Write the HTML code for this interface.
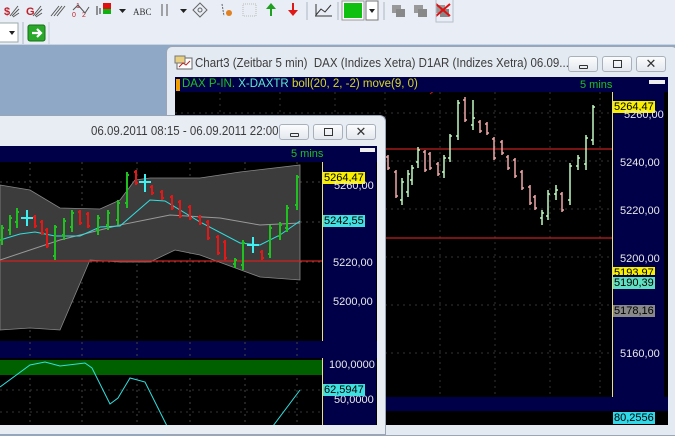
<!DOCTYPE html>
<html><head><meta charset="utf-8"><style>
*{margin:0;padding:0;box-sizing:border-box}
body{width:675px;height:425px;overflow:hidden;position:relative;background:#8ea8c6;font-family:"Liberation Sans",sans-serif}
.abs{position:absolute}
.tb{left:0;top:0;width:675px;height:45px;background:#e9edf5;border-bottom:1px solid #c9d2e0}
.title{font-size:12.5px;color:#3c3c3c;white-space:nowrap;transform-origin:0 0}
.btn{position:absolute;width:30px;height:16px;border:1px solid #a8b0bc;border-radius:3px;background:linear-gradient(#fbfcfd,#e4e8ee)}
.lbl{position:absolute;font-size:11px;line-height:12px;padding:0 1px;white-space:nowrap}
.ax{position:absolute;font-size:11px;color:#e8e8e8;white-space:nowrap}
</style></head><body>
<div class="abs tb"></div>
<svg class="abs" style="left:0;top:0" width="460" height="45">
<text x="4" y="15" font-size="11" font-weight="bold" fill="#c0202a" font-family="Liberation Sans">$</text>
<path d="M10 16 L18 6 M12 16 L19 9 M13 17 L19 13" stroke="#555" stroke-width="1"/>
<text x="26" y="15" font-size="11" font-weight="bold" fill="#c0202a" font-family="Liberation Sans">G</text>
<path d="M33 16 L41 6 M35 16 L42 9 M36 17 L42 13" stroke="#555"/>
<path d="M51 16 L59 6 M54 16 L62 6 M57 16 L65 6" stroke="#555"/>
<text x="76" y="8" font-size="7" fill="#c0202a">1</text><text x="72" y="17" font-size="7" fill="#c0202a">0</text><text x="82" y="17" font-size="7" fill="#c0202a">2</text>
<path d="M73 10 L78 5 L85 13 L89 7" stroke="#555" fill="none"/>
<rect x="103" y="3" width="8" height="6" fill="#e01010"/><rect x="103" y="9" width="8" height="5" fill="#10b010"/>
<path d="M97 6 V15 M100 8 V14" stroke="#333"/>
<path d="M119 9 L126 9 L122.5 13 Z" fill="#222"/>
<text x="133" y="15" font-size="9" fill="#333" font-family="Liberation Serif">ABC</text>
<path d="M162 4 V16 M167 4 V16" stroke="#555"/>
<path d="M180 9 L187 9 L183.5 13 Z" fill="#222"/>
<path d="M200 3 L207 10 L200 17 L193 10 Z" stroke="#666" fill="none"/><circle cx="200" cy="10" r="2" fill="none" stroke="#666"/>
<path d="M222 4 L224 16" stroke="#666" stroke-dasharray="2 1"/><circle cx="229" cy="13" r="3" fill="#e08020"/>
<rect x="243" y="4" width="13" height="12" fill="none" stroke="#bbb" stroke-dasharray="1 1"/>
<path d="M270 16 V9 H266 L271 3 L276 9 H272 V16 Z" fill="#20a020"/>
<path d="M292 3 V10 H288 L293 16 L298 10 H294 V3 Z" fill="#e01818"/>
<path d="M307 2 V20" stroke="#b0b8c4"/>
<path d="M315 16 H332 M316 15 L321 9 L325 12 L331 5 M316 4 V16" stroke="#333" fill="none"/>
<path d="M338 2 V20" stroke="#b0b8c4"/>
<rect x="342" y="1" width="22" height="19" fill="#fff" stroke="#999"/><rect x="344" y="3" width="18" height="15" fill="#10c010"/>
<rect x="366" y="1" width="12" height="19" fill="#fff" stroke="#777"/><path d="M369 9 L375 9 L372 13 Z" fill="#222"/>
<path d="M384 2 V20" stroke="#b0b8c4"/>
<rect x="392" y="5" width="9" height="8" fill="#999"/><rect x="396" y="9" width="9" height="8" fill="#888"/>
<rect x="414" y="5" width="9" height="8" fill="#999"/><rect x="418" y="9" width="9" height="8" fill="#888"/>
<rect x="436" y="5" width="9" height="8" fill="#999"/><rect x="440" y="9" width="9" height="8" fill="#888"/><path d="M436 4 L450 16 M450 4 L436 16" stroke="#e01010" stroke-width="2"/>
<path d="M436 0 V22 H453 V0" stroke="#b8c0cc" fill="none"/>
<rect x="-4" y="23" width="22" height="19" fill="#fff" stroke="#9aa"/><path d="M9 31 L15 31 L12 35 Z" fill="#222"/>
<path d="M23 22 V44" stroke="#b0b8c4"/>
<rect x="28" y="25" width="17" height="16" rx="2" fill="#2aa82a" stroke="#187018"/><path d="M32 33 H40 M37 29 L41 33 L37 37" stroke="#fff" stroke-width="2.2" fill="none"/>
<path d="M49 22 V44" stroke="#c8d0dc"/>
</svg>

<div class="abs" style="left:166px;top:46px;width:512px;height:390px;background:#e4eaf2;border:1px solid #9aa6b6;border-radius:6px 6px 0 0"></div>
<svg class="abs" style="left:174px;top:55px" width="20" height="16"><rect x="3" y="3" width="15" height="11" fill="#fff" stroke="#666"/><rect x="1" y="1" width="10" height="7" fill="#e8d080" stroke="#777"/><path d="M5 12 L9 8 L12 10 L16 6" stroke="#c02020" fill="none"/></svg>
<div class="abs title" style="left:195px;top:56px;transform:scaleX(0.92)">Chart3 (Zeitbar 5 min)&nbsp; DAX (Indizes Xetra) D1AR (Indizes Xetra) 06.09...</div>
<div class="btn" style="left:568px;top:56px"><div class="abs" style="left:10px;top:8px;width:9px;height:4px;border:1px solid #333;border-radius:1px"></div></div>
<div class="btn" style="left:602px;top:56px"><div class="abs" style="left:10px;top:3px;width:9px;height:8px;border:1px solid #333"></div></div>
<div class="btn" style="left:636px;top:56px;color:#333;font-size:13px;text-align:center;line-height:14px">✕</div>
<div class="abs" style="left:175px;top:77px;width:493px;height:348px;background:#000"></div>
<div class="abs" style="left:175px;top:77px;width:493px;height:15px;background:#000048"></div>
<div class="abs" style="left:176px;top:79px;width:4px;height:12px;background:#f0a000"></div>
<div class="abs" style="left:182px;top:78px;font-size:11.5px;white-space:nowrap"><span style="color:#20c020">DAX P-IN.</span> <span style="color:#60e8d0">X-DAXTR</span> <span style="color:#d8d820">boll(20, 2, -2) move(9, 0)</span></div>
<div class="abs" style="left:580px;top:79px;font-size:11px;color:#20c020">5 mins</div>
<div class="abs" style="left:649px;top:80px;width:16px;height:4px;background:#eee"></div>
<div class="abs" style="left:612px;top:92px;width:52px;height:305px;background:#000048;border-left:1px solid #e8e080"></div>
<div class="abs" style="left:175px;top:397px;width:493px;height:14px;background:#000048"></div>
<svg class="abs" style="left:175px;top:92px" width="437" height="305">
<g stroke="#333" stroke-dasharray="2 4"><path d="M0 21 H437 M0 69 H437 M0 117 H437 M0 165 H437 M0 213 H437 M0 261 H437"/><path d="M45 0 V305 M105 0 V305 M160 0 V305 M210 0 V305 M265 0 V305 M320 0 V305 M375 0 V305 M425 0 V305"/></g>
<path d="M0 57 H437 M0 146 H437" stroke="#c02020" stroke-width="1.3"/>
<path d="M270 -10 L255 2" stroke="#c02020"/>
</svg>
<svg class="abs" style="left:0;top:0" width="675" height="425">
<g stroke-width="1.5">
<g stroke="#f0a8a8"><path d="M388 155V170M386 157H388M388 168H390"/><path d="M396 170V198M394 172H396M396 196H398"/><path d="M425 150V172M423 152H425M425 170H427"/><path d="M430 152V170M428 154H430M430 168H432"/><path d="M438 162V176M436 164H438M438 174H440"/><path d="M465 97V122M463 100H465M465 120H467"/><path d="M480 120V133M478 122H480M480 131H482"/><path d="M487 122V135M485 124H487M487 133H489"/><path d="M494 137V160M492 139H494M494 158H496"/><path d="M502 140V155M500 142H502M502 153H504"/><path d="M508 155V170M506 157H508M508 168H510"/><path d="M515 158V178M513 160H515M515 176H517"/><path d="M522 170V190M520 172H522M522 188H524"/><path d="M530 185V205M528 187H530M530 203H532"/><path d="M535 195V210M533 197H535M535 208H537"/><path d="M562 192V212M560 194H562M562 210H564"/></g>
<g stroke="#c0f8c0"><path d="M402 178V205M400 200H402M402 182H404"/><path d="M408 170V197M406 192H408M408 174H410"/><path d="M412 165V185M410 180H412M412 168H414"/><path d="M418 147V168M416 162H418M418 150H420"/><path d="M444 155V178M442 172H444M444 158H446"/><path d="M450 134V162M448 158H450M450 136H452"/><path d="M458 100V140M456 136H458M458 103H460"/><path d="M473 100V130M471 125H473M473 118H475"/><path d="M542 210V225M540 218H542M542 213H544"/><path d="M548 190V220M546 216H548M548 194H550"/><path d="M556 185V200M554 194H556M556 190H558"/><path d="M570 163V205M568 200H570M570 166H572"/><path d="M578 155V170M576 166H578M578 158H580"/><path d="M586 135V170M584 164H586M586 138H588"/><path d="M593 105V145M591 140H593M593 107H595"/></g>
</g></svg>
<div class="lbl" style="left:613px;top:101px;background:#f8f000;color:#000">5264,47</div>
<div class="ax" style="left:624px;top:109px">5260,00</div>
<div class="ax" style="left:620px;top:157px">5240,00</div>
<div class="ax" style="left:620px;top:205px">5220,00</div>
<div class="ax" style="left:620px;top:253px">5200,00</div>
<div class="lbl" style="left:613px;top:267px;background:#f8f000;color:#000;height:8px;overflow:hidden">5193,97</div>
<div class="lbl" style="left:613px;top:277px;background:#60e0c0;color:#000">5190,39</div>
<div class="lbl" style="left:613px;top:305px;background:#888;color:#000">5178,16</div>
<div class="ax" style="left:620px;top:348px">5160,00</div>
<div class="lbl" style="left:613px;top:412px;background:#30d8e8;color:#000">80,2556</div>

<div class="abs" style="left:-6px;top:115px;width:392px;height:320px;background:#e8edf4;border:1px solid #9aa6b6;border-radius:6px 6px 0 0"></div>
<div class="abs title" style="left:91px;top:124px;transform:scaleX(0.92)">06.09.2011 08:15 - 06.09.2011 22:00</div>
<div class="btn" style="left:279px;top:124px"><div class="abs" style="left:10px;top:8px;width:9px;height:4px;border:1px solid #333;border-radius:1px"></div></div>
<div class="btn" style="left:313px;top:124px"><div class="abs" style="left:10px;top:3px;width:9px;height:8px;border:1px solid #333"></div></div>
<div class="btn" style="left:346px;top:124px;color:#333;font-size:13px;text-align:center;line-height:14px">✕</div>
<div class="abs" style="left:0;top:146px;width:377px;height:279px;background:#000"></div>
<div class="abs" style="left:0;top:146px;width:377px;height:16px;background:#000048"></div>
<div class="abs" style="left:291px;top:148px;font-size:11px;color:#20c020">5 mins</div>
<div class="abs" style="left:360px;top:148px;width:15px;height:4px;background:#eee"></div>
<div class="abs" style="left:322px;top:162px;width:54px;height:179px;background:#000048;border-left:1px solid #e8e080"></div>
<div class="abs" style="left:0;top:341px;width:377px;height:17px;background:#000048"></div>
<div class="abs" style="left:322px;top:358px;width:54px;height:67px;background:#000048;border-left:1px solid #e8e080"></div>
<svg class="abs" style="left:0;top:162px" width="322" height="263">
<g stroke="#444" stroke-dasharray="2 4"><path d="M0 20 H322 M0 60 H322 M0 100 H322 M0 140 H322"/><path d="M30 0 V263 M82 0 V263 M137 0 V263 M190 0 V263 M245 0 V263 M297 0 V263"/></g>
<path d="M0 23 L30 28 L60 46 L100 47 L120 38 L135 18 L150 16 L200 16 L240 10 L300 3 L300 118 L260 115 L200 93 L175 88 L150 100 L120 100 L90 98 L60 168 L30 166 L0 168 Z" fill="#3c3c3c" stroke="#888" stroke-width="0.8"/>
<path d="M0 99 H322" stroke="#d02020" stroke-width="1.3"/>
<path d="M0 98 L60 78 L120 63 L170 53 L220 56 L260 63 L300 61" stroke="#999" fill="none"/>
<path d="M0 78 L20 72 L35 70 L55 74 L80 74 L100 65 L120 64 L150 38 L165 39 L200 60 L240 81 L260 83 L280 73 L300 59" stroke="#30e0e0" fill="none"/>
<rect x="0" y="198" width="322" height="15" fill="#006000"/>
<g stroke="#333" stroke-dasharray="2 4"><path d="M0 228 H322 M0 250 H322"/></g>
<path d="M0 225 L30 203 L45 200 L60 204 L85 201 L92 206 L110 242 L118 236 L130 216 L145 220 L175 280 M270 268 L300 228" stroke="#30e0e0" fill="none"/>
</svg>
<svg class="abs" style="left:0;top:0" width="675" height="425">
<g stroke-width="2">
<g stroke="#e01818"><path d="M35 215V228M33 217H35M35 226H37"/><path d="M42 220V235M40 222H42M42 233H44"/><path d="M47 228V248M45 230H47M47 246H49"/><path d="M80 210V225M78 212H80M80 223H82"/><path d="M88 212V228M86 214H88M88 226H90"/><path d="M136 170V185M134 172H136M136 183H138"/><path d="M152 185V195M150 187H152M152 193H154"/><path d="M162 190V200M160 192H162M162 198H164"/><path d="M172 195V210M170 197H172M172 208H174"/><path d="M180 200V218M178 202H180M180 216H182"/><path d="M190 205V220M188 207H190M190 218H192"/><path d="M200 215V225M198 217H200M200 223H202"/><path d="M208 220V240M206 222H208M208 238H210"/><path d="M218 235V255M216 237H218M218 253H220"/><path d="M225 240V260M223 242H225M225 258H227"/><path d="M262 250V260M260 252H262M262 258H264"/></g>
<g stroke="#20c020"><path d="M2 225V245M0 240H2M2 228H4"/><path d="M10 215V235M8 230H10M10 218H12"/><path d="M17 208V228M15 222H17M17 212H19"/><path d="M55 225V260M53 256H55M55 227H57"/><path d="M64 218V240M62 235H64M64 221H66"/><path d="M72 210V232M70 227H72M72 213H74"/><path d="M98 215V235M96 230H98M98 218H100"/><path d="M108 210V230M106 225H108M108 213H110"/><path d="M118 200V225M116 220H118M118 203H120"/><path d="M127 172V208M125 203H127M127 175H129"/><path d="M235 258V268M233 264H235M235 260H237"/><path d="M243 240V270M241 265H243M243 243H245"/><path d="M270 225V258M268 254H270M270 228H272"/><path d="M280 222V240M278 236H280M280 225H282"/><path d="M287 205V232M285 228H287M287 208H289"/><path d="M297 175V210M295 205H297M297 177H299"/></g>
<g stroke="#40f0f0"><path d="M27 210V226M21 218H33"/><path d="M145 174V192M139 182H151"/><path d="M253 237V253M247 245H259"/></g>
</g></svg>
<div class="lbl" style="left:323px;top:172px;background:#f8f000;color:#000">5264,47</div>
<div class="ax" style="left:334px;top:180px">5260,00</div>
<div class="lbl" style="left:323px;top:215px;background:#40e0e0;color:#000">5242,55</div>
<div class="ax" style="left:333px;top:257px">5220,00</div>
<div class="ax" style="left:333px;top:296px">5200,00</div>
<div class="ax" style="left:329px;top:359px">100,0000</div>
<div class="ax" style="left:334px;top:394px">50,0000</div>
<div class="lbl" style="left:323px;top:384px;background:#40e0e0;color:#000">62,5947</div>
</body></html>
